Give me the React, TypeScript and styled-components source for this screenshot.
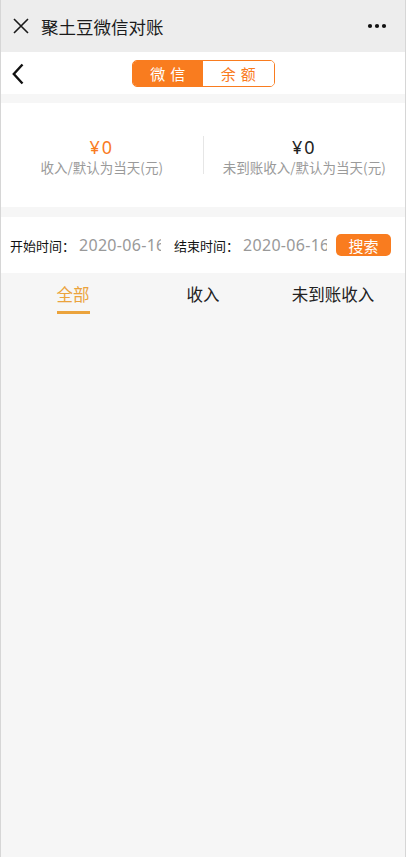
import React, { useState } from "react";
import styled, { createGlobalStyle } from "styled-components";

const GlobalStyle = createGlobalStyle`
  html, body {
    margin: 0;
    padding: 0;
    background: #f6f6f6;
    font-family: "Noto Sans CJK SC", "Noto Sans", sans-serif;
  }
  * {
    box-sizing: border-box;
  }
`;

const ORANGE = "#f97c1f";

const Page = styled.div`
  min-height: 857px;
  display: flex;
  flex-direction: column;
  background: #f6f6f6;
  border-left: 1px solid #d6d6d6;
  border-right: 1px solid #d6d6d6;
`;

const TitleBar = styled.div`
  height: 52px;
  background: #ededed;
  display: flex;
  align-items: center;
  padding: 0 12px 0 11px;
`;

const TitleText = styled.div`
  flex: 1;
  margin-left: 11px;
  font-size: 17.5px;
  color: #1b1b1b;
  letter-spacing: 0;
`;

const IconBox = styled.div`
  display: flex;
  align-items: center;
`;

const NavBar = styled.div`
  height: 42px;
  background: #fff;
  display: flex;
  align-items: center;
  justify-content: center;
  position: relative;
`;

const BackBtn = styled.div`
  position: absolute;
  left: 10px;
  top: 11px;
  display: flex;
`;

const Segment = styled.div`
  display: flex;
  width: 143px;
  height: 27px;
  border: 1px solid ${ORANGE};
  border-radius: 5px;
  overflow: hidden;
`;

const SegItem = styled.div<{ active?: boolean }>`
  flex: 1;
  display: flex;
  align-items: center;
  justify-content: center;
  font-size: 15px;
  letter-spacing: 5px;
  padding-left: 5px;
  background: ${(p) => (p.active ? ORANGE : "#fff")};
  color: ${(p) => (p.active ? "#fff" : ORANGE)};
`;

const Gap = styled.div<{ h: number }>`
  height: ${(p) => p.h}px;
`;

const StatsCard = styled.div`
  height: 104px;
  background: #fff;
  display: flex;
  align-items: center;
`;

const StatCol = styled.div<{ divided?: boolean }>`
  flex: 1;
  display: flex;
  flex-direction: column;
  align-items: center;
  justify-content: center;
  height: 38px;
  border-left: ${(p) => (p.divided ? "1px solid #e6e6e6" : "none")};
`;

const Amount = styled.div<{ accent?: boolean }>`
  font-size: 18px;
  line-height: 20px;
  margin-top: 2px;
  color: ${(p) => (p.accent ? ORANGE : "#222")};
  font-family: "Noto Sans", sans-serif;
  letter-spacing: 2px;
`;

const StatLabel = styled.div`
  margin-top: 2px;
  font-size: 13.5px;
  line-height: 16px;
  color: #9a9a9a;
`;

const FilterRow = styled.div`
  height: 56px;
  background: #fff;
  display: flex;
  align-items: center;
  padding: 0 14px 0 9px;
`;

const FilterLabel = styled.span`
  font-size: 13px;
  color: #111;
  white-space: nowrap;
`;

const DateInput = styled.input<{ w: number }>`
  width: ${(p) => p.w}px;
  border: none;
  outline: none;
  padding: 0;
  margin-left: 4px;
  font-size: 16px;
  color: #999;
  background: transparent;
  font-family: "Noto Sans", sans-serif;
  letter-spacing: 0.3px;
`;

const Spacer = styled.div<{ w: number }>`
  width: ${(p) => p.w}px;
  flex-shrink: 0;
`;

const SearchBtn = styled.button`
  margin-left: auto;
  width: 55px;
  height: 22px;
  border: none;
  border-radius: 5px;
  background: ${ORANGE};
  color: #fff;
  font-size: 15px;
  padding: 0;
  font-family: "Noto Sans CJK SC", sans-serif;
`;

const Tabs = styled.div`
  display: grid;
  grid-template-columns: repeat(3, 1fr);
  padding: 0 7px;
  height: 45px;
`;

const Tab = styled.div`
  display: flex;
  justify-content: center;
  align-items: flex-start;
  padding-top: 10px;
`;

const TabText = styled.span<{ active?: boolean }>`
  font-size: 16.5px;
  line-height: 22px;
  padding-bottom: 6px;
  color: ${(p) => (p.active ? "#eba33c" : "#222")};
  border-bottom: ${(p) => (p.active ? "3px solid #eba33c" : "3px solid transparent")};
`;

const CloseIcon = () => (
  <svg width="18" height="18" viewBox="0 0 18 18">
    <path d="M2 2 L16 16 M16 2 L2 16" stroke="#1a1a1a" strokeWidth="1.6" fill="none" />
  </svg>
);

const MoreIcon = () => (
  <svg width="20" height="6" viewBox="0 0 20 6">
    <circle cx="3" cy="3" r="2.1" fill="#111" />
    <circle cx="10" cy="3" r="2.1" fill="#111" />
    <circle cx="17" cy="3" r="2.1" fill="#111" />
  </svg>
);

const BackIcon = () => (
  <svg width="14" height="22" viewBox="0 0 14 22">
    <path d="M11.5 1.5 L2.8 11 L11.5 20.5" stroke="#111" strokeWidth="2.4" fill="none" />
  </svg>
);

const tabs = ["全部", "收入", "未到账收入"];

export default function App() {
  const [seg, setSeg] = useState(0);
  const [tab, setTab] = useState(0);

  return (
    <Page>
      <GlobalStyle />
      <TitleBar>
        <IconBox>
          <CloseIcon />
        </IconBox>
        <TitleText>聚土豆微信对账</TitleText>
        <IconBox style={{ marginRight: 6 }}>
          <MoreIcon />
        </IconBox>
      </TitleBar>

      <NavBar>
        <BackBtn>
          <BackIcon />
        </BackBtn>
        <Segment>
          <SegItem active={seg === 0} onClick={() => setSeg(0)}>
            微信
          </SegItem>
          <SegItem active={seg === 1} onClick={() => setSeg(1)}>
            余额
          </SegItem>
        </Segment>
      </NavBar>

      <Gap h={9} />

      <StatsCard>
        <StatCol>
          <Amount accent>¥0</Amount>
          <StatLabel>收入/默认为当天(元)</StatLabel>
        </StatCol>
        <StatCol divided>
          <Amount>¥0</Amount>
          <StatLabel>未到账收入/默认为当天(元)</StatLabel>
        </StatCol>
      </StatsCard>

      <Gap h={10} />

      <FilterRow>
        <FilterLabel>开始时间：</FilterLabel>
        <DateInput w={82} defaultValue="2020-06-16" />
        <Spacer w={13} />
        <FilterLabel>结束时间：</FilterLabel>
        <DateInput w={84} defaultValue="2020-06-16" />
        <SearchBtn>搜索</SearchBtn>
      </FilterRow>

      <Tabs>
        {tabs.map((t, i) => (
          <Tab key={t} onClick={() => setTab(i)}>
            <TabText active={tab === i}>{t}</TabText>
          </Tab>
        ))}
      </Tabs>
    </Page>
  );
}
